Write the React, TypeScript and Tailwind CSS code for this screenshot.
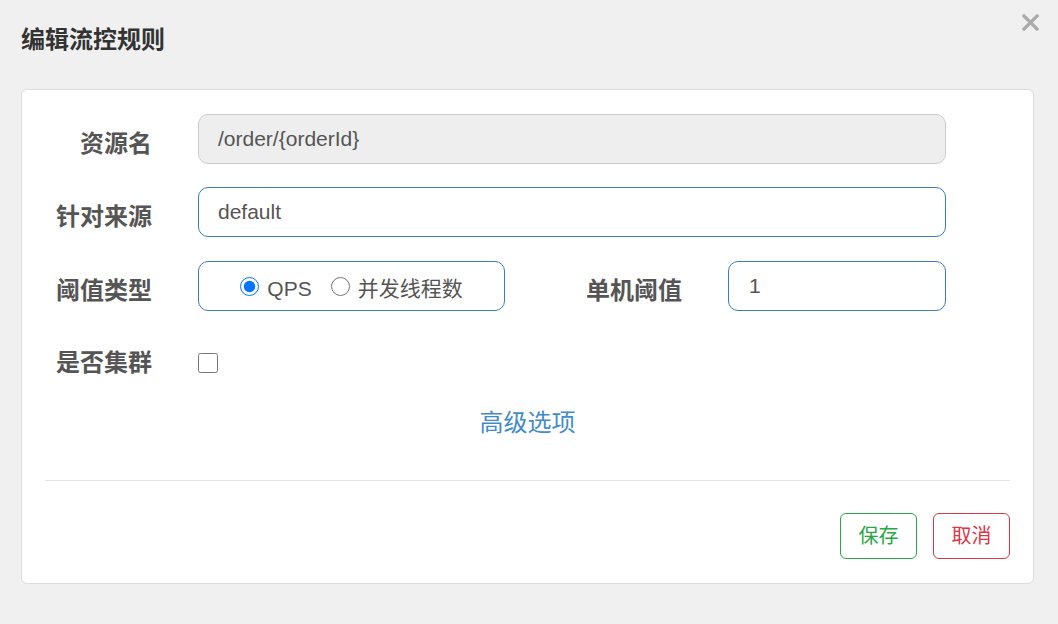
const font = { fontFamily: '"Liberation Sans", "Noto Sans CJK SC", sans-serif' };

const Label = ({ children, className = '' }: { children: React.ReactNode; className?: string }) => (
  <div className={`text-right text-[24px] font-bold text-[#555] leading-[49px] ${className}`}>{children}</div>
);

const App = () => {
  return (
    <div className="w-[1058px] h-[624px] bg-[#f0f0f0] overflow-hidden" style={font}>
      {/* Header */}
      <div className="flex items-start justify-between h-[89px]">
        <h4 className="ml-[21px] mt-[26px] text-[24px] leading-[28px] font-bold text-[#333]">编辑流控规则</h4>
        <button className="mt-[14px] mr-[19px] w-[17px] h-[17px] text-[#aaa]">
          <svg viewBox="0 0 17 17" className="w-[17px] h-[17px]">
            <path d="M2 2 L15 15 M15 2 L2 15" stroke="currentColor" strokeWidth="3.2" strokeLinecap="square" />
          </svg>
        </button>
      </div>

      {/* Card */}
      <div className="ml-[21px] w-[1013px] h-[495px] bg-white border border-[#ddd] rounded-[6px] pt-[24px] flex flex-col">
        <div className="flex items-center h-[50px]">
          <Label className="w-[130px] mt-[9px]">资源名</Label>
          <div className="ml-[46px] w-[748px] h-[50px] rounded-[10px] bg-[#eee] border border-[#ccc] flex items-center px-[19px] text-[21px] text-[#555]">
            /order/{'{orderId}'}
          </div>
        </div>

        <div className="flex items-center h-[50px] mt-[23px]">
          <Label className="w-[130px] mt-[9px]">针对来源</Label>
          <div className="ml-[46px] w-[748px] h-[50px] rounded-[10px] bg-white border border-[#3c7bbd] flex items-center px-[19px] text-[21px] text-[#555]">
            default
          </div>
        </div>

        <div className="flex items-center h-[50px] mt-[24px]">
          <Label className="w-[130px] mt-[9px]">阈值类型</Label>
          <div className="ml-[46px] w-[307px] h-[50px] rounded-[10px] border border-[#3c7bbd] flex items-center justify-center pt-[6px] text-[21px] text-[#555]">
            <label className="flex items-center">
              <input type="radio" name="grade" defaultChecked className="w-[19px] h-[19px] m-0 -translate-y-[3px]" />
              <span className="ml-[8px]">QPS</span>
            </label>
            <label className="flex items-center ml-[19px]">
              <input type="radio" name="grade" className="w-[19px] h-[19px] m-0 -translate-y-[3px]" />
              <span className="ml-[8px]">并发线程数</span>
            </label>
          </div>
          <Label className="w-[177px] mt-[9px]">单机阈值</Label>
          <div className="ml-[46px] w-[218px] h-[50px] rounded-[10px] bg-white border border-[#3c7bbd] flex items-center px-[20px] text-[21px] text-[#555]">
            1
          </div>
        </div>

        <div className="flex items-center h-[49px] mt-[27px]">
          <Label className="w-[130px]">是否集群</Label>
          <input type="checkbox" className="ml-[46px] w-[20px] h-[20px] m-0" />
        </div>

        <div className="mt-[19px] h-[34px] flex items-center justify-center">
          <a className="text-[24px] leading-[34px] text-[#428bca]">高级选项</a>
        </div>

        <div className="mx-[23px] mt-[40px] border-t border-[#e5e5e5]" />

        <div className="flex justify-end gap-[16px] mr-[23px] mt-[32px]">
          <button className="w-[77px] h-[46px] rounded-[6px] border border-[#28a745] text-[#28a745] text-[20px] bg-white">保存</button>
          <button className="w-[77px] h-[46px] rounded-[6px] border border-[#dc3545] text-[#dc3545] text-[20px] bg-white">取消</button>
        </div>
      </div>
    </div>
  );
};

export default App;
